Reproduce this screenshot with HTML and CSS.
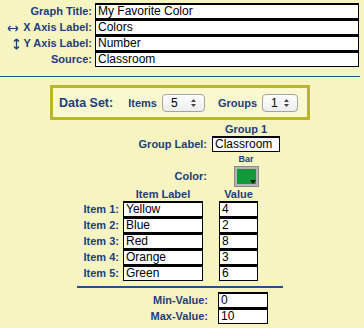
FILE: index.html
```html
<!DOCTYPE html>
<html lang="en">
<head>
  <meta charset="UTF-8" />
  <title>Create a Graph - Bar</title>
  <link rel="stylesheet" href="styles.css">
</head>
<body>

  <div class="titles">
    <label class="lbl">Graph Title:</label>
    <div class="box">My Favorite Color</div>
    <label class="lbl"><svg class="arrow" width="12" height="7" viewBox="0 0 12 7"><path d="M1 3.5 H11 M1 3.5 L3.5 1 M1 3.5 L3.5 6 M11 3.5 L8.5 1 M11 3.5 L8.5 6" stroke="#1d3d7c" stroke-width="1.1" fill="none"/></svg> X Axis Label:</label>
    <div class="box">Colors</div>
    <label class="lbl"><svg class="arrow" width="7" height="12" viewBox="0 0 7 12"><path d="M3.5 1 V11 M3.5 1 L1 3.5 M3.5 1 L6 3.5 M3.5 11 L1 8.5 M3.5 11 L6 8.5" stroke="#1d3d7c" stroke-width="1.3" fill="none"/></svg> Y Axis Label:</label>
    <div class="box">Number</div>
    <label class="lbl">Source:</label>
    <div class="box">Classroom</div>
  </div>

  <div class="rule top-rule"></div>

  <div class="dataset">
    <span class="ds-title">Data Set:</span>
    <span class="ds-lbl">Items</span>
    <div class="select items-sel">5
      <svg class="updown" width="7" height="10" viewBox="0 0 7 10"><path d="M3.5 1 L6 4 H1 Z M3.5 9 L6 6 H1 Z" fill="#444"/></svg>
    </div>
    <span class="ds-lbl">Groups</span>
    <div class="select groups-sel">1
      <svg class="updown" width="7" height="10" viewBox="0 0 7 10"><path d="M3.5 1 L6 4 H1 Z M3.5 9 L6 6 H1 Z" fill="#444"/></svg>
    </div>
  </div>

  <div class="group">
    <span></span>
    <div class="head">Group 1</div>
    <label class="lbl">Group Label:</label>
    <div class="box">Classroom</div>
    <span></span>
    <div class="head small">Bar</div>
    <label class="lbl">Color:</label>
    <div class="swatch-cell">
      <div class="swatch"><div class="fill"></div><span class="tri"></span></div>
    </div>
  </div>

  <div class="items">
    <span></span>
    <div class="head">Item Label</div>
    <div class="head">Value</div>

    <label class="lbl">Item 1:</label>
    <div class="box">Yellow</div>
    <div class="box">4</div>
    <label class="lbl">Item 2:</label>
    <div class="box">Blue</div>
    <div class="box">2</div>
    <label class="lbl">Item 3:</label>
    <div class="box">Red</div>
    <div class="box">8</div>
    <label class="lbl">Item 4:</label>
    <div class="box">Orange</div>
    <div class="box">3</div>
    <label class="lbl">Item 5:</label>
    <div class="box">Green</div>
    <div class="box">6</div>
  </div>

  <div class="rule mid-rule"></div>

  <div class="range">
    <label class="lbl">Min-Value:</label>
    <div class="box">0</div>
    <label class="lbl">Max-Value:</label>
    <div class="box">10</div>
  </div>

</body>
</html>
```

FILE: styles.css
```css
body {
  margin: 0;
  background-color: #f6f4c0;
  font-family: "Liberation Sans", Arial, sans-serif;
  color: #1d3d7c;
  width: 364px;
  height: 328px;
  overflow: hidden;
}

.lbl {
  font-size: 11px;
  font-weight: bold;
  text-align: right;
  line-height: 16px;
  white-space: nowrap;
}

.arrow {
  vertical-align: middle;
  margin-right: 1px;
}

.box {
  box-sizing: border-box;
  height: 16px;
  border: 1px solid #000;
  border-top-width: 2px;
  background: white;
  color: #000;
  font-size: 12px;
  line-height: 13px;
  padding-left: 2px;
  white-space: nowrap;
  overflow: hidden;
}

.head {
  font-size: 11px;
  font-weight: bold;
  text-align: center;
  line-height: 13px;
}

.head.small {
  font-size: 9px;
  line-height: 11px;
}

/* top titles */
.titles {
  display: grid;
  grid-template-columns: 92px 264px;
  column-gap: 3px;
  padding-top: 3px;
}

.rule {
  background-color: #23508e;
}

.top-rule {
  height: 1px;
  width: 360px;
  margin-top: 9px;
}

.mid-rule {
  height: 2px;
  width: 206px;
  margin: 5px 0 0 77px;
}

/* data set box */
.dataset {
  box-sizing: border-box;
  margin: 8px 0 0 50px;
  width: 260px;
  height: 35px;
  border: 3px solid #bbb52c;
  background-color: #faf8ce;
  display: flex;
  align-items: center;
  padding-left: 6px;
}

.ds-title {
  font-size: 12.5px;
  font-weight: bold;
  margin-right: 15px;
}

.ds-lbl {
  font-size: 11px;
  font-weight: bold;
  margin-right: 5px;
}

.select {
  box-sizing: border-box;
  height: 18px;
  border: 1px solid #a3a3a3;
  border-radius: 4px;
  background: linear-gradient(#ffffff, #ececec);
  color: #000;
  font-size: 12px;
  line-height: 16px;
  padding-left: 8px;
  position: relative;
}

.items-sel {
  width: 43px;
  margin-right: 13px;
}

.groups-sel {
  width: 36px;
}

.updown {
  position: absolute;
  right: 7px;
  top: 3px;
}

/* group */
.group {
  display: grid;
  grid-template-columns: 207px 68px;
  column-gap: 5px;
  margin-top: 3px;
}

.group .box {
  margin-bottom: 2px;
}

.swatch-cell {
  display: flex;
  justify-content: center;
  padding-top: 1px;
}

.swatch {
  box-sizing: border-box;
  width: 25px;
  height: 21px;
  background: #b4b4b4;
  border: 1px solid #8c8c8c;
  padding: 2px;
  position: relative;
}

.fill {
  width: 100%;
  height: 100%;
  background: #129a38;
}

.tri {
  position: absolute;
  right: 2px;
  bottom: 2px;
  width: 0;
  height: 0;
  border-left: 3px solid transparent;
  border-right: 3px solid transparent;
  border-top: 4px solid #111;
}

.group .lbl:nth-of-type(2) {
  line-height: 22px;
}

/* items */
.items {
  display: grid;
  grid-template-columns: 119px 80px 51px;
  column-gap: 4px;
  margin-top: 1px;
}

.items .box:nth-child(3n) {
  margin-left: 12px;
}

.items .head:nth-child(3) {
  margin-left: 12px;
}

/* min max */
.range {
  display: grid;
  grid-template-columns: 208px 50px;
  column-gap: 10px;
  margin-top: 4px;
}
```
